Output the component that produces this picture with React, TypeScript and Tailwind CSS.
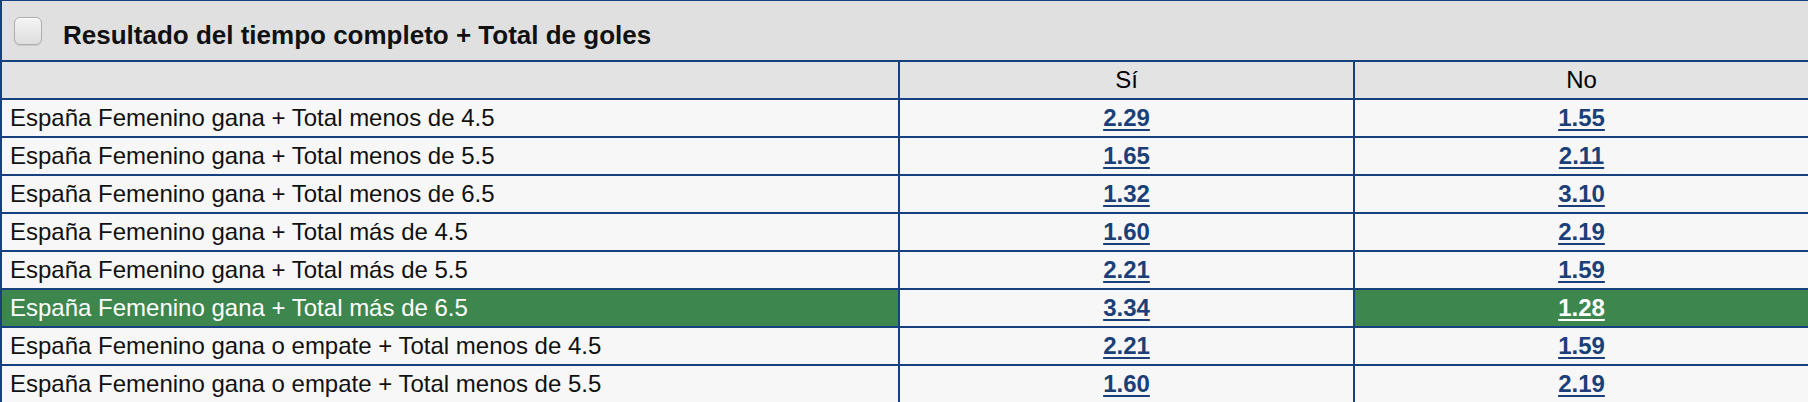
import React from "react";

type Row = { label: string; si: string; no: string; hl?: boolean };

const rows: Row[] = [
  { label: "España Femenino gana + Total menos de 4.5", si: "2.29", no: "1.55" },
  { label: "España Femenino gana + Total menos de 5.5", si: "1.65", no: "2.11" },
  { label: "España Femenino gana + Total menos de 6.5", si: "1.32", no: "3.10" },
  { label: "España Femenino gana + Total más de 4.5", si: "1.60", no: "2.19" },
  { label: "España Femenino gana + Total más de 5.5", si: "2.21", no: "1.59" },
  { label: "España Femenino gana + Total más de 6.5", si: "3.34", no: "1.28", hl: true },
  { label: "España Femenino gana o empate + Total menos de 4.5", si: "2.21", no: "1.59" },
  { label: "España Femenino gana o empate + Total menos de 5.5", si: "1.60", no: "2.19" },
];

function Odd({ v, white }: { v: string; white?: boolean }) {
  return (
    <a
      className={
        "font-bold underline decoration-2 underline-offset-[3px] cursor-pointer " +
        (white ? "text-white" : "text-[#1b3f78]")
      }
    >
      {v}
    </a>
  );
}

export default function App() {
  return (
    <div
      className="w-[1808px] h-[402px] overflow-hidden bg-white text-black"
      style={{ fontFamily: '"Liberation Sans", Arial, Helvetica, sans-serif' }}
    >
      <div className="border-l-2 border-[#17407e]">
        {/* Title bar */}
        <div className="h-[62px] border-t border-b-2 border-[#17407e] bg-[#e0e0e0] flex items-center pl-[12px]">
          <div className="w-[28px] h-[28px] rounded-[6px] border border-[#adadad] bg-gradient-to-b from-[#f4f4f4] to-[#dedede] shadow-[inset_0_1px_1px_rgba(255,255,255,0.8),0_1px_1px_rgba(0,0,0,0.1)]" />
          <div className="ml-[21px] mt-[9px] text-[26px] font-bold leading-none text-[#111]">
            Resultado del tiempo completo + Total de goles
          </div>
        </div>
        {/* Column header */}
        <div className="flex h-[38px] border-b-2 border-[#17407e] bg-[#e3e3e3] text-[24px] leading-none">
          <div className="w-[896px]" />
          <div className="w-[455px] border-l-2 border-[#17407e] flex items-center justify-center">Sí</div>
          <div className="w-[455px] border-l-2 border-[#17407e] flex items-center justify-center">No</div>
        </div>
        {rows.map((r, i) => (
          <div key={i} className="flex h-[38px] border-b-2 border-[#17407e] bg-[#f7f7f7] text-[24px] leading-none">
            <div
              className={
                "w-[896px] flex items-center pl-[8px] " +
                (r.hl ? "bg-[#3d874f] text-white" : "text-[#111]")
              }
            >
              {r.label}
            </div>
            <div className="w-[455px] border-l-2 border-[#17407e] flex items-center justify-center">
              <Odd v={r.si} />
            </div>
            <div
              className={
                "w-[455px] border-l-2 border-[#17407e] flex items-center justify-center " +
                (r.hl ? "bg-[#3d874f]" : "")
              }
            >
              <Odd v={r.no} white={r.hl} />
            </div>
          </div>
        ))}
      </div>
    </div>
  );
}
